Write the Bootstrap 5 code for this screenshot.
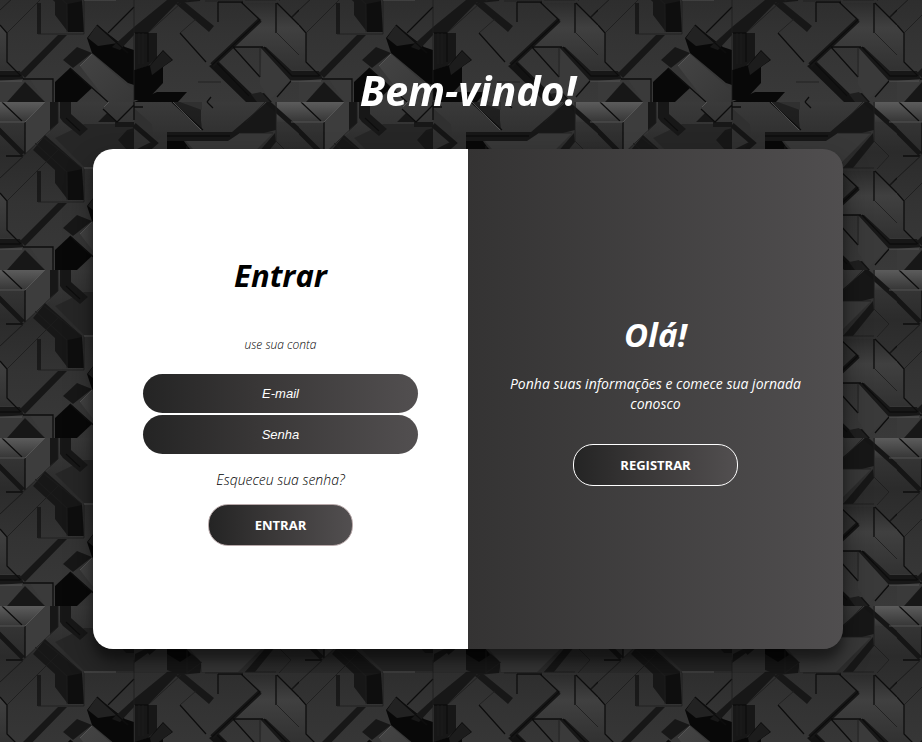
<!DOCTYPE html>
<html lang="pt-BR">
<head>
<meta charset="utf-8">
<meta name="viewport" content="width=device-width, initial-scale=1">
<title>Bem-vindo!</title>
<link rel="stylesheet" href="https://cdn.jsdelivr.net/npm/bootstrap@5.3.0/dist/css/bootstrap.min.css">
<style>
body{background:#262626;font-family:"Open Sans","Noto Sans",sans-serif;font-size:14px;line-height:20px}
.backdrop{z-index:-1}
.page{padding:60px 12px 24px 26px}
.welcome{font-size:41px;line-height:60px;margin-bottom:29px}
.panel-box{max-width:750px;min-height:500px;border-radius:20px;box-shadow:0 14px 28px rgba(0,0,0,.4),0 10px 10px rgba(0,0,0,.3)}
.sign-in{padding:24px 50px;color:#000}
.sign-up{padding:24px 40px;background:linear-gradient(to right,#343333,#504e4f)}
.heading{font-size:32px;line-height:46px}
.sign-in .heading{font-size:31px;margin-bottom:37px}
.sign-up .heading{font-size:33px;margin-bottom:16px}
.hint{font-size:12px;margin-bottom:19px;font-weight:300}
.fields{gap:2px;margin-bottom:16px}
.field,.pill{background:linear-gradient(to right,#242424,#383636 40%,#524f50);color:#fff}
.field{height:39px;border-radius:20px;font:italic 13px "Liberation Sans",Arial,sans-serif}
.field::placeholder{color:#fff;opacity:1}
.forgot{color:#000;margin-bottom:14px;font-weight:300}
.pill{height:42px;border:1px solid #b8a9aa;border-radius:20px;padding:0 46px;font-size:13px;line-height:20px}
.pill-light{border-color:#fff}
.pitch{margin-bottom:30px;font-size:14px}
.edge{fill:none;stroke:#0c0c0c;stroke-width:1.3}
.fine{fill:none;stroke:#1c1c1c;stroke-width:.8}
.glint{fill:none;stroke:#5a5a5a;stroke-width:.8}
.band{fill:none;stroke:#151515;stroke-width:5}
.shade{fill:#171717}
.deep{fill:#080808}
</style>
</head>
<body>
<svg class="backdrop position-fixed top-0 start-0 w-100 h-100" aria-hidden="true">
<defs>
<linearGradient id="base" x2="0" y2="1"><stop offset="0" stop-color="#3a3a3a"/><stop offset=".3" stop-color="#2b2b2b"/><stop offset=".6" stop-color="#333"/><stop offset="1" stop-color="#393939"/></linearGradient>
<linearGradient id="lit" x2="0" y2="1"><stop offset="0" stop-color="#5c5c5c"/><stop offset="1" stop-color="#363636"/></linearGradient>
<linearGradient id="plate" gradientUnits="userSpaceOnUse" x1="0" x2="0" y1="69" y2="140"><stop offset="0" stop-color="#2c2c2c"/><stop offset=".35" stop-color="#404040"/><stop offset="1" stop-color="#303030"/></linearGradient>
<linearGradient id="slab" x2="1" y2="1"><stop offset="0" stop-color="#444"/><stop offset="1" stop-color="#373737"/></linearGradient>
<pattern id="blocks" width="299" height="168" y="102" patternUnits="userSpaceOnUse">
<rect width="299" height="168" fill="url(#base)"/>
<path fill="url(#lit)" d="M0 0H45L25 20H0ZM277 0H299V20H277Z"/>
<path fill="#3d3d3d" d="M25 20L45 0H50V30L25 52Z"/>
<path fill="#3a3a3a" d="M0 147H24L7 168H0ZM30 145H53V168H46Z"/>
<path fill="url(#plate)" d="M277 69L299 91V136H292L264 113H235L262 86L243 69ZM0 91L7 99V128L15 136H0Z"/>
<path fill="#3a3a3a" d="M262 114L290 146L270 165L260 150Z"/>
<path fill="url(#slab)" d="M92 120L128 152L134 158V168H108L80 132Z"/>
<path fill="#262626" d="M84 22H134V65H84L55 36Z"/>
<path fill="#303030" d="M134 6L152 22L155 41L167 30V66H134Z"/>
<path class="shade" d="M50 0H58V21L50 28ZM60 0H71V12L88 27L80 34L63 20L60 16Z"/>
<path class="shade" d="M33 48L45 33L82 66L84 98L68 98L55 81V68Z"/>
<path class="deep" opacity=".6" d="M67 70L82 67L84 98H68Z"/>
<path class="shade" d="M58 101H67L25 144L20 139ZM0 137H20L24 145L0 147Z"/>
<path class="shade" d="M25 148L45 168H7Z"/>
<path class="shade" d="M63 126L77 113L92 119L73 134Z"/>
<path class="deep" d="M55 148L70 134L92 154L77 168H55Z"/>
<path class="deep" d="M92 119L87 104L97 91L125 113L134 116V151L128 149Z"/>
<path fill="#222" d="M88 104L97 91L118 109L98 112Z"/>
<path class="shade" d="M112 113L134 93V101L120 116Z"/>
<path class="shade" d="M98 20L107 11L117 20ZM115 20H134V25H115ZM118 38L127 28L134 26V47H126Z"/>
<path class="shade" d="M134 93L167 66L182 64L148 99H134ZM176 70L182 66L214 92L209 98Z"/>
<path class="shade" d="M135 99H157V124L148 132L135 136Z"/>
<path class="deep" d="M134 136L150 131L163 116L173 126L163 133V149L147 166H134Z"/>
<path fill="#1c1c1c" d="M150 132L163 117L172 126L152 141Z"/>
<path class="deep" d="M157 158H187L178 168H134Z"/>
<path class="shade" d="M167 44H187L202 56L200 67L180 69L167 64ZM135 48L155 38L148 47L134 57Z"/>
<path class="deep" opacity=".5" d="M172 0H201V18L202 27Z"/>
<path fill="#303030" d="M180 0H202V8Z"/>
<path class="shade" d="M167 30H232L267 0L276 8V28L232 39H167Z"/>
<path class="deep" d="M167 39H184L191 49L180 56L167 48Z"/>
<path fill="#383838" d="M186 39H228L240 31H273L238 66H202L201 56Z"/>
<path class="shade" d="M245 66L275 31L276 40L255 66Z"/>
<path fill="#121212" d="M209 132L218 127L253 161L264 159L272 168H246Z"/>
<path fill="#1f1f1f" d="M251 160L261 158L270 168H257Z"/>
<path class="shade" d="M260 113H266L292 137H299V147H291Z"/>
<path class="band" d="M267 0L302 31M-3 26L23 52M134 23L155 41L148 47M260 86L212 131"/>
<path class="edge" d="M2 0L22 19M25 20V52M6 54H23M0 91L7 99V128L21 142M23 145H53V168M38 69V100M40 69V100M70 134L108 168M108 99L134 73M97 91L128 119M180 99L206 128M218 68V88M233 113L260 143M233 113H263M241 68L260 86L212 131M276 69V99M277 69L299 91M292 83L299 76M291 147L277 163M134 5H143M103 7L117 20L134 3M211 163L207 168M207 0L213 6M172 0L203 28M264 113L292 142H299M0 142H20M167 34H230M135 99H148V128M218 68H243M134 0V18M217 129L249 162M66 16L80 29"/>
<path class="fine" d="M0 76L58 21V0M7 99L58 48M35 41L67 70V98M43 35L82 66M38 100H84V66M180 99L196 85M260 113V143M198 148H221M277 99L299 121M276 0V39L291 54L279 67M292 83L299 77M0 76L23 55M148 99L181 69M139 99V130M143 99V130M187 44V67L202 56M134 54V168M240 31H273M205 67H243M265 0L246 20M245 66H276"/>
<path class="glint" d="M0 20H25L45 0M291 20H299M84 66H116M92 120L80 132M104 5L109 0M173 0L201 28M0 147H22M291 147H299M0 0H40M277 0H299"/>
</pattern>
</defs>
<rect width="100%" height="100%" fill="url(#blocks)"/>
</svg>
<main class="page">
<h1 class="welcome text-center text-white fst-italic fw-bold">Bem-vindo!</h1>
<div class="panel-box row g-0 mx-auto overflow-hidden">
<form class="sign-in col-6 bg-white d-flex flex-column align-items-center justify-content-center text-center fst-italic">
<h2 class="heading fw-bold">Entrar</h2>
<span class="hint">use sua conta</span>
<div class="fields d-flex flex-column w-100">
<input class="field w-100 border-0 px-3 text-center" type="email" placeholder="E-mail" aria-label="E-mail">
<input class="field w-100 border-0 px-3 text-center" type="password" placeholder="Senha" aria-label="Senha">
</div>
<a class="forgot text-decoration-none" href="#">Esqueceu sua senha?</a>
<button class="pill fw-bold" type="submit">ENTRAR</button>
</form>
<section class="sign-up col-6 text-white d-flex flex-column align-items-center justify-content-center text-center">
<h2 class="heading fw-bold fst-italic">Olá!</h2>
<p class="pitch fst-italic">Ponha suas informações e comece sua jornada conosco</p>
<button class="pill pill-light fw-bold" type="button">REGISTRAR</button>
</section>
</div>
</main>
<script src="https://cdn.jsdelivr.net/npm/bootstrap@5.3.0/dist/js/bootstrap.bundle.min.js"></script>
</body>
</html>
